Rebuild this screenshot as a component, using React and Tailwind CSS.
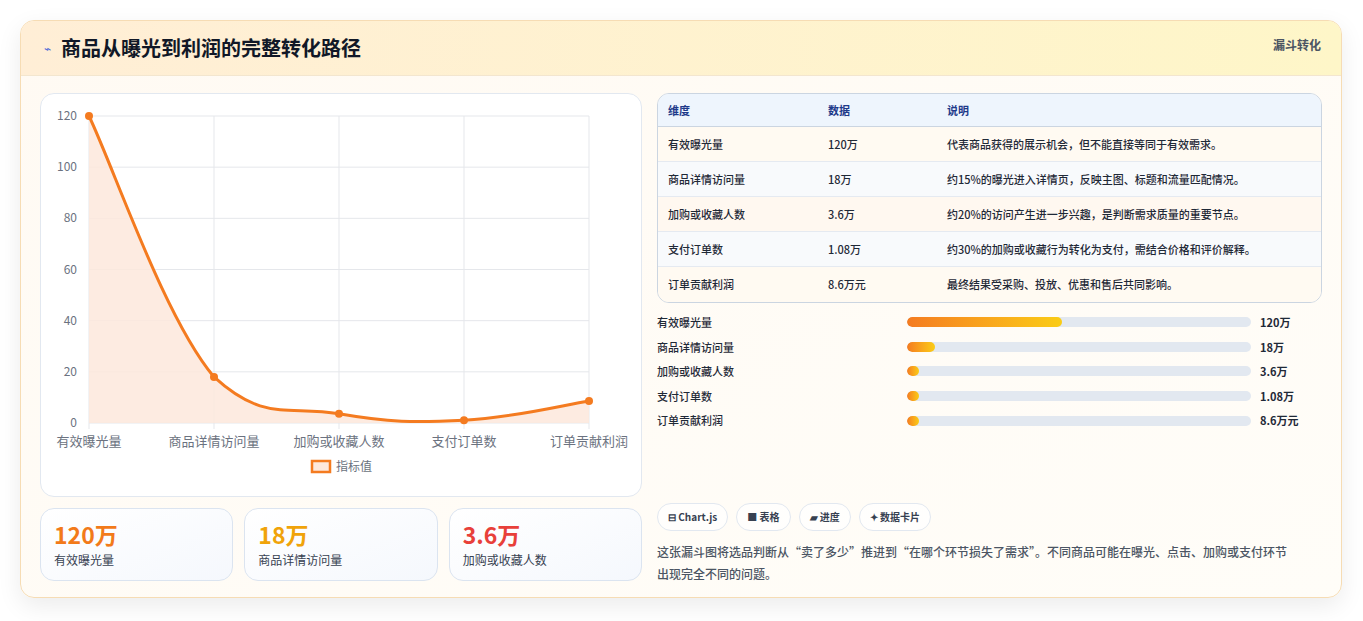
const F = { fontFamily: '"Noto Sans CJK SC","Noto Sans",sans-serif' };
const rows = [
  ["有效曝光量", "120万", "代表商品获得的展示机会，但不能直接等同于有效需求。", "bg-[#fffaf2]"],
  ["商品详情访问量", "18万", "约15%的曝光进入详情页，反映主图、标题和流量匹配情况。", "bg-[#f8fafc]"],
  ["加购或收藏人数", "3.6万", "约20%的访问产生进一步兴趣，是判断需求质量的重要节点。", "bg-[#fff8f0]"],
  ["支付订单数", "1.08万", "约30%的加购或收藏行为转化为支付，需结合价格和评价解释。", "bg-[#f8fafc]"],
  ["订单贡献利润", "8.6万元", "最终结果受采购、投放、优惠和售后共同影响。", "bg-[#fffaf2]"],
];
const bars = [45, 8, 3.5, 3.5, 3.5];
const vals = [120, 18, 3.6, 1.08, 8.6];
const xs = [48, 173, 298, 423, 548];
const y = v => 329 - (v / 120) * 307;
function path() {
  const p = vals.map((v, i) => [xs[i], y(v)]);
  let d = `M${p[0][0]},${p[0][1]}`;
  for (let i = 0; i < p.length - 1; i++) {
    const p0 = p[i - 1] || p[i], p1 = p[i], p2 = p[i + 1], p3 = p[i + 2] || p2;
    const t = 0.2;
    const c1 = [p1[0] + (p2[0] - p0[0]) * t, Math.min(329, p1[1] + (p2[1] - p0[1]) * t)];
    const c2 = [p2[0] - (p3[0] - p1[0]) * t, Math.min(329, p2[1] - (p3[1] - p1[1]) * t)];
    d += ` C${c1[0]},${c1[1]} ${c2[0]},${c2[1]} ${p2[0]},${p2[1]}`;
  }
  return d;
}
export default function App() {
  const d = path();
  return (
    <div className="w-[1363px] h-[621px] bg-white pt-[20px] px-[20px]" style={F}>
      <div className="w-[1322px] h-[578px] rounded-[14px] border border-[#f6dcb4] bg-gradient-to-br from-[#fffaf3] to-[#fffdf8] shadow-[0_8px_24px_rgba(0,0,0,0.08)] overflow-hidden">
        <div className="h-[55px] flex items-center justify-between px-[20px] bg-gradient-to-r from-[#ffeed6] to-[#fef6c8] border-b border-[#f3e6cf]">
          <div className="flex items-center gap-[10px] pl-[3px]">
            <span className="text-[#4f6bd8] text-[12px]">⌁</span>
            <span className="text-[20px] font-bold text-[#111827]">商品从曝光到利润的完整转化路径</span>
          </div>
          <span className="text-[12px] font-bold text-[#4b5563] self-start mt-[15px]">漏斗转化</span>
        </div>
        <div className="flex gap-[15px] px-[19px] pt-[17px]">
          <div className="w-[602px] flex flex-col gap-[11px]">
            <div className="h-[404px] rounded-[14px] border border-[#e2e8f0] bg-white">
              <svg width="600" height="402" className="block">
                {[0, 20, 40, 60, 80, 100, 120].map(v => (
                  <g key={v}>
                    <line x1="48" x2="548" y1={y(v)} y2={y(v)} stroke="#e5e7eb" />
                    <text x="36" y={y(v) + 4} textAnchor="end" fontSize="12" fill="#6b7280">{v}</text>
                  </g>
                ))}
                {xs.map(x => <line key={x} x1={x} x2={x} y1="22" y2="335" stroke="#e5e7eb" />)}
                <path d={d + " L548,329 L48,329 Z"} fill="#fde8dc" opacity="0.85" />
                <path d={d} fill="none" stroke="#f47b20" strokeWidth="3" />
                {vals.map((v, i) => <circle key={i} cx={xs[i]} cy={y(v)} r="4" fill="#f47b20" />)}
                {["有效曝光量", "商品详情访问量", "加购或收藏人数", "支付订单数", "订单贡献利润"].map((t, i) => (
                  <text key={t} x={xs[i]} y="352" textAnchor="middle" fontSize="13" fill="#6b7280">{t}</text>
                ))}
                <rect x="271" y="367" width="18" height="11" fill="#fde8dc" stroke="#f47b20" strokeWidth="2.5" />
                <text x="295" y="377" fontSize="12" fill="#6b7280">指标值</text>
              </svg>
            </div>
            <div className="flex gap-[11px]">
              {[["120万", "text-[#f27a1a]", "有效曝光量"], ["18万", "text-[#f0a30a]", "商品详情访问量"], ["3.6万", "text-[#e8403a]", "加购或收藏人数"]].map(([v, c, l]) => (
                <div key={l} className="flex-1 h-[73px] rounded-[14px] border border-[#dbe4f0] bg-gradient-to-br from-white to-[#f5f8fd] px-[13px] pt-[10px]">
                  <div className={`text-[23px] font-bold leading-[30px] ${c}`}>{v}</div>
                  <div className="text-[12px] text-[#374151] mt-[2px]">{l}</div>
                </div>
              ))}
            </div>
          </div>
          <div className="w-[666px] flex flex-col">
            <div className="rounded-[12px] border border-[#cbd5e1] overflow-hidden">
              <div className="h-[33px] flex items-center bg-[#eef5fd] text-[11px] font-bold text-[#1e3a8a] border-b border-[#cbd5e1]">
                <span className="w-[170px] pl-[10px]">维度</span><span className="w-[119px]">数据</span><span>说明</span>
              </div>
              {rows.map(([a, b, c, bg], i) => (
                <div key={a} className={`h-[35px] flex items-center text-[11px] font-medium text-[#1f2937] ${bg} ${i < 4 ? "border-b border-[#e5eaf1]" : ""}`}>
                  <span className="w-[170px] pl-[10px]">{a}</span><span className="w-[119px]">{b}</span><span>{c}</span>
                </div>
              ))}
            </div>
            <div className="flex flex-col mt-[7px]">
              {rows.map(([a, b], i) => (
                <div key={a} className="h-[24.6px] flex items-center text-[11px] font-medium text-[#1f2937]">
                  <span className="w-[250px]">{a}</span>
                  <div className="w-[344px] h-[10px] rounded-full bg-[#e2e8f0] overflow-hidden">
                    <div className="h-full rounded-full bg-gradient-to-r from-[#f47b20] to-[#facc15]" style={{ width: bars[i] + "%" }} />
                  </div>
                  <span className="ml-[9px] font-bold">{b}</span>
                </div>
              ))}
            </div>
            <div className="flex gap-[8px] mt-[70px]">
              {["⊟ Chart.js", "■ 表格", "▰ 进度", "✦ 数据卡片"].map(t => (
                <span key={t} className="h-[28px] px-[10px] flex items-center rounded-full border border-[#e2e8f0] bg-white/70 text-[10px] font-bold text-[#374151]">{t}</span>
              ))}
            </div>
            <p className="mt-[10px] w-[640px] text-[12px] leading-[22px] text-[#4b5563] font-medium">这张漏斗图将选品判断从“卖了多少”推进到“在哪个环节损失了需求”。不同商品可能在曝光、点击、加购或支付环节出现完全不同的问题。</p>
          </div>
        </div>
      </div>
    </div>
  );
}
